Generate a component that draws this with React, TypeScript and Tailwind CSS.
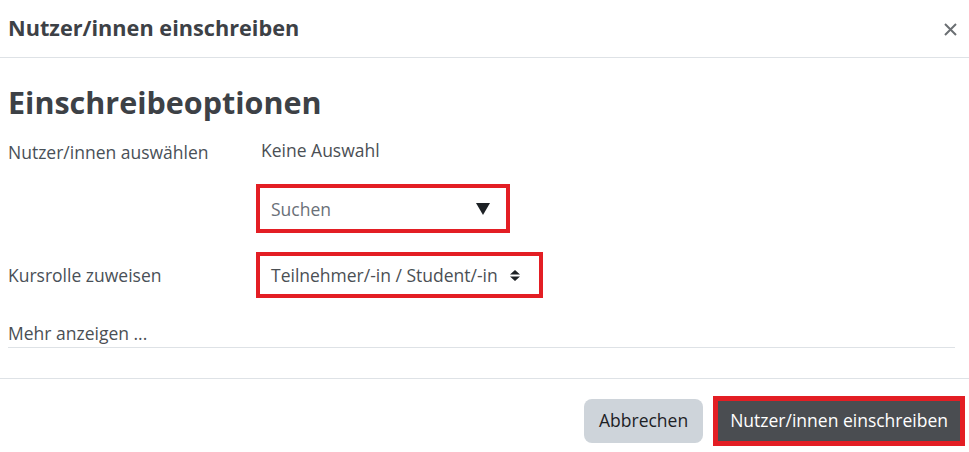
import React from "react";

export default function App() {
  return (
    <div className="w-[969px] h-[452px] bg-white overflow-hidden text-[#495057]" style={{ fontFamily: '"Open Sans", "Noto Sans", sans-serif' }}>
      {/* Header */}
      <div className="h-[58px] flex items-center justify-between pl-2 pr-[11px] border-b border-[#dee2e6]">
        <div className="text-[21.7px] font-bold text-[#3d4146]">Nutzer/innen einschreiben</div>
        <svg width="15" height="15" viewBox="0 0 15 15" className="mt-[2px]">
          <path d="M2 2 L13 13 M13 2 L2 13" stroke="#6b6f73" strokeWidth="2" />
        </svg>
      </div>
      {/* Body */}
      <div className="px-2">
        <h2 className="mt-[22px] text-[30.5px] leading-[44px] font-bold text-[#3d4146]">Einschreibeoptionen</h2>
        <div className="flex mt-[13px]">
          <div className="w-[253px] text-[17.5px] pt-[2px]">Nutzer/innen auswählen</div>
          <div className="flex flex-col">
            <div className="text-[17.5px] text-[#4b4f54]">Keine Auswahl</div>
            <div className="mt-[21px] -ml-[5px] w-[254px] h-[49px] border-4 border-[#e31e24] flex items-center justify-between pl-[11px] pr-[16px]">
              <span className="text-[17.5px] text-[#6a7078]">Suchen</span>
              <svg width="14" height="12" viewBox="0 0 14 12"><path d="M0 0 L14 0 L7 12 Z" fill="#1d2125" /></svg>
            </div>
          </div>
        </div>
        <div className="flex items-center mt-[19px]">
          <div className="w-[248px] text-[17.5px]">Kursrolle zuweisen</div>
          <div className="w-[287px] h-[46px] border-4 border-[#e31e24] flex items-center pl-[11px]">
            <span className="text-[17.5px] text-[#4b4f54]">Teilnehmer/-in / Student/-in</span>
            <svg className="ml-[12px]" width="10" height="11" viewBox="0 0 10 11"><path d="M5 0 L10 4.5 L0 4.5 Z M0 6.5 L10 6.5 L5 11 Z" fill="#1d2125" /></svg>
          </div>
        </div>
        <div className="mt-[22px] border-b border-[#dee2e6] mr-[6px] text-[17.5px] text-[#4b4f54]">Mehr anzeigen ...</div>
      </div>
      {/* Footer */}
      <div className="mt-[30px] border-t border-[#dee2e6] flex justify-end items-center gap-[10px] pt-[17px] pr-[4px]">
        <button className="h-[44px] px-[15px] rounded-[8px] bg-[#ced4da] text-[17.5px] text-[#1d2125]">Abbrechen</button>
        <div className="border-[5px] border-[#e31e24]">
          <button className="h-[40px] px-[12px] bg-[#4a4d51] text-[17.5px] text-white">Nutzer/innen einschreiben</button>
        </div>
      </div>
    </div>
  );
}
